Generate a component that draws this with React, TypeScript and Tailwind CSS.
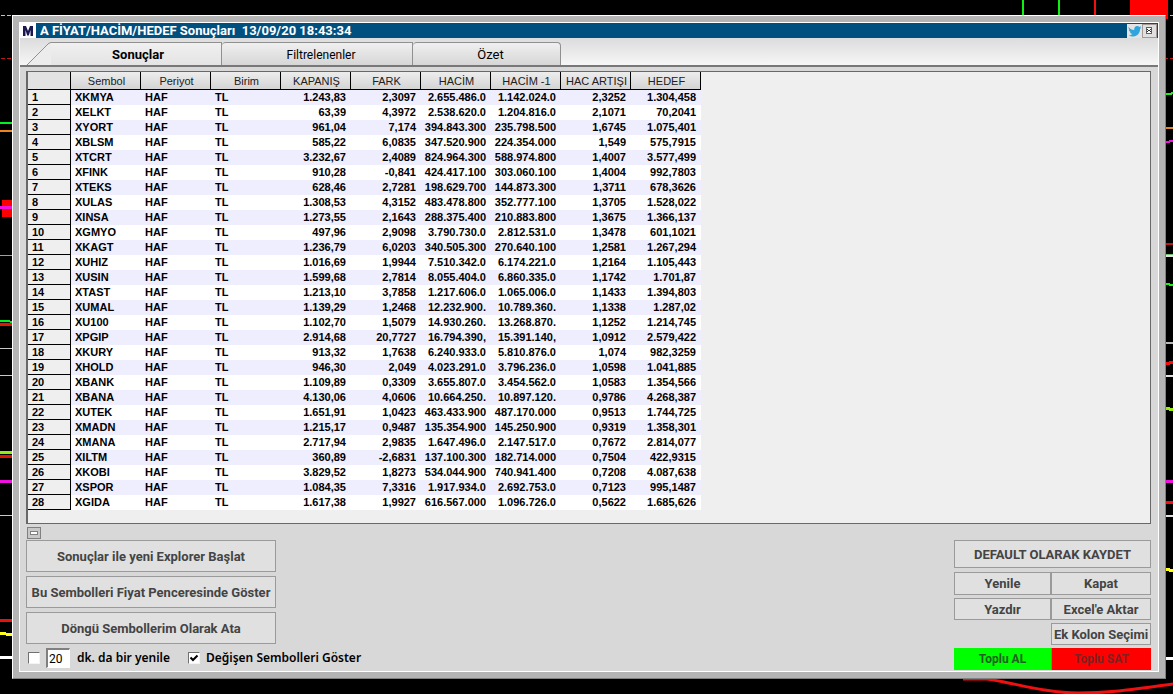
import type { ReactNode } from "react";

const COLUMNS = ["Sembol", "Periyot", "Birim", "KAPANIŞ", "FARK", "HACİM", "HACİM -1", "HAC ARTIŞI", "HEDEF"];

const ROWS = `XKMYA 1.243,83 2,3097 2.655.486.0 1.142.024.0 2,3252 1.304,458
XELKT 63,39 4,3972 2.538.620.0 1.204.816.0 2,1071 70,2041
XYORT 961,04 7,174 394.843.300 235.798.500 1,6745 1.075,401
XBLSM 585,22 6,0835 347.520.900 224.354.000 1,549 575,7915
XTCRT 3.232,67 2,4089 824.964.300 588.974.800 1,4007 3.577,499
XFINK 910,28 -0,841 424.417.100 303.060.100 1,4004 992,7803
XTEKS 628,46 2,7281 198.629.700 144.873.300 1,3711 678,3626
XULAS 1.308,53 4,3152 483.478.800 352.777.100 1,3705 1.528,022
XINSA 1.273,55 2,1643 288.375.400 210.883.800 1,3675 1.366,137
XGMYO 497,96 2,9098 3.790.730.0 2.812.531.0 1,3478 601,1021
XKAGT 1.236,79 6,0203 340.505.300 270.640.100 1,2581 1.267,294
XUHIZ 1.016,69 1,9944 7.510.342.0 6.174.221.0 1,2164 1.105,443
XUSIN 1.599,68 2,7814 8.055.404.0 6.860.335.0 1,1742 1.701,87
XTAST 1.213,10 3,7858 1.217.606.0 1.065.006.0 1,1433 1.394,803
XUMAL 1.139,29 1,2468 12.232.900. 10.789.360. 1,1338 1.287,02
XU100 1.102,70 1,5079 14.930.260. 13.268.870. 1,1252 1.214,745
XPGIP 2.914,68 20,7727 16.794.390, 15.391.140, 1,0912 2.579,422
XKURY 913,32 1,7638 6.240.933.0 5.810.876.0 1,074 982,3259
XHOLD 946,30 2,049 4.023.291.0 3.796.236.0 1,0598 1.041,885
XBANK 1.109,89 0,3309 3.655.807.0 3.454.562.0 1,0583 1.354,566
XBANA 4.130,06 4,0606 10.664.250. 10.897.120. 0,9786 4.268,387
XUTEK 1.651,91 1,0423 463.433.900 487.170.000 0,9513 1.744,725
XMADN 1.215,17 0,9487 135.354.900 145.250.900 0,9319 1.358,301
XMANA 2.717,94 2,9835 1.647.496.0 2.147.517.0 0,7672 2.814,077
XILTM 360,89 -2,6831 137.100.300 182.714.000 0,7504 422,9315
XKOBI 3.829,52 1,8273 534.044.900 740.941.400 0,7208 4.087,638
XSPOR 1.084,35 7,3316 1.917.934.0 2.692.753.0 0,7123 995,1487
XGIDA 1.617,38 1,9927 616.567.000 1.096.726.0 0,5622 1.685,626`
  .split("\n")
  .map((line) => line.split(" "));

function Backdrop() {
  return (
    <div aria-hidden="true">
      <svg className="absolute left-0 top-0" width="12" height="694" shapeRendering="crispEdges">
        <path d="M1 15.5h4M7 15.5h4" stroke="#c9c98a" />
        <path d="M1 58.5h4M7 58.5h4" stroke="#c01818" />
        <path d="M0 123h12M0 321h8l4 1" stroke="#00f020" strokeWidth="2" />
        <path d="M0 131h12" stroke="#f08020" strokeWidth="2" />
        <path d="M2 200h10v17H2z" fill="#f00" />
        <path d="M0 208l12-1M0 481h12" stroke="#f010e0" strokeWidth="3" />
        <path d="M0 255.5h12" stroke="#70c070" />
        <path d="M0 325l12-1M0 456h12" stroke="#e01800" strokeWidth="3" />
        <path d="M0 348h12M0 375.5h12M0 515.5h12" stroke="#c8c8c8" />
        <path d="M0 452l12 1" stroke="#90f010" strokeWidth="3" />
        <path d="M0 620h12" stroke="#e81010" strokeWidth="3" />
        <path d="M0 633l12 2" stroke="#ffff18" strokeWidth="3" />
        <path d="M0 657h12" stroke="#fff" strokeWidth="3" />
      </svg>
      <svg className="absolute right-0 top-0" width="7" height="694" shapeRendering="crispEdges">
        <path d="M0 15.5h2M4 15.5h3" stroke="#c9c98a" />
        <path d="M0 58.5h2M4 58.5h3" stroke="#c01818" />
        <path d="M0 94h4l3-1M0 284l7 1" stroke="#20f020" strokeWidth="2" />
        <path d="M0 128h7" stroke="#e08830" strokeWidth="2" />
        <path d="M0 142l7-1" stroke="#f010e0" strokeWidth="2" />
        <path d="M0 244h7" stroke="#b81818" strokeWidth="2" />
        <path d="M0 256h7M0 375.500h7M0 516h7" stroke="#e0e0e0" strokeWidth="2" />
        <path d="M0 254.500h7" stroke="#70c070" />
        <path d="M0 343h7" stroke="#b8b8b8" strokeWidth="2" />
        <path d="M0 364l7-2M0 502h7" stroke="#f01010" strokeWidth="3" />
        <path d="M0 408l7 2" stroke="#90f010" strokeWidth="3" />
        <path d="M0 481h7" stroke="#f010e0" strokeWidth="3" />
        <path d="M0 569l7 2" stroke="#ffff18" strokeWidth="3" />
        <path d="M0 658h7" stroke="#fff" strokeWidth="3" />
      </svg>
      <svg className="absolute right-0 top-0" width="160" height="20" shapeRendering="crispEdges">
        <path d="M9 0h2v15h-2zM45 0h2v15h-2z" fill="#10f010" />
        <path d="M81 0h2v15h-2z" fill="#f01010" />
        <path d="M117 0h38v19h-38z" fill="#f00" />
      </svg>
      <svg className="absolute bottom-0 right-0" width="220" height="16">
        <path d="M10 1L34 1C62 5 92 15 125 15S175 12 220 6" fill="none" stroke="#f01010" strokeWidth="3" />
      </svg>
    </div>
  );
}

function PushButton({ children, className = "" }: { children: ReactNode; className?: string }) {
  return (
    <button
      type="button"
      className={`flex items-center justify-center whitespace-nowrap border border-[#9a9a9a] bg-[#e0e0e0] pt-px font-['Roboto',sans-serif] text-[13px] font-bold leading-4 text-[#444444] ${className}`}
    >
      {children}
    </button>
  );
}

function TitleBar() {
  return (
    <header className="flex h-[15px] items-center bg-[#00507f]">
      <svg width="16" height="15" className="shrink-0">
        <path d="M0 0h16v15H0z" fill="#fff" />
        <path d="M3 13V3h3L8 8l2-5h3v10h-2.500V7L8.800 12.500H7.200L5.500 7v6z" fill="#1c1850" />
      </svg>
      <h1 className="ml-1 flex-1 whitespace-pre font-['Roboto',sans-serif] text-[13px] font-bold leading-4 text-white">
        A FİYAT/HACİM/HEDEF Sonuçları{"  "}13/09/20 18:43:34
      </h1>
      <button type="button" aria-label="Twitter" className="h-[14px] w-[15px] self-end bg-[#e4e4e4]">
        <svg width="15" height="14" viewBox="0 0 15 14">
          <path d="M1.500 3C3 5 5 6 7.200 6 7 3.500 8.500 2 10.200 2c.9 0 1.600.3 2.200.9l1.600-.6-.7 1.500 1-.2-1.200 1.500C13 9 10.500 12.500 6.500 12.500c-1.900 0-3.500-.4-4.800-1.300 1.500 0 2.700-.3 3.800-1.200-1.300-.1-2.200-.8-2.600-1.800h1.200C2.600 7.700 1.800 6.600 1.800 5.200l1.100.3C1.700 4.700 1.200 3.800 1.500 3z" fill="#30a4dc" />
        </svg>
      </button>
      <button type="button" aria-label="Pencereyi kapat" className="mr-px h-[14px] w-[15px] self-end border border-[#a39a98] bg-[#e0e0e0]">
        <svg width="13" height="12" viewBox="0 0 13 12" shapeRendering="crispEdges">
          <path d="M3.500 2.500h5v6h-5z" fill="#fff" stroke="#606060" />
          <path d="M4 4h1v1H4zM7 4h1v1H7zM5 5h2v1H5zM4 6h1v1H4zM7 6h1v1H7z" fill="#303030" />
        </svg>
      </button>
    </header>
  );
}

function Tabs() {
  return (
    <div role="tablist" className="flex h-[27px] items-end bg-linear-to-b from-[#dcdcdc] to-[#f6f6f6] pl-[7px] font-['Roboto',sans-serif] text-[13px] leading-4">
      <svg width="24" height="23" className="shrink-0">
        <path d="M0 23L20 3Q22 .5 24 .5V23z" fill="#ececec" />
        <path d="M0 23L20 3Q22 .5 24 .5" fill="none" stroke="#909090" />
      </svg>
      <button type="button" role="tab" aria-selected="true" className="h-[23px] w-[171px] border-r border-t border-[#909090] bg-linear-to-b from-[#f0f0f0] to-[#e4e4e4] pl-1 pt-px font-bold">
        Sonuçlar
      </button>
      <button type="button" role="tab" aria-selected="false" className="h-[23px] w-[191px] rounded-tl border-r border-t border-[#909090] bg-linear-to-b from-[#f0f0f0] to-[#d6d6d6] pl-2 pt-px text-[12px]">
        Filtrelenenler
      </button>
      <button type="button" role="tab" aria-selected="false" className="h-[23px] w-[148px] rounded-t border-r border-t border-[#909090] bg-linear-to-b from-[#f0f0f0] to-[#d6d6d6] pl-2 pt-px">
        Özet
      </button>
    </div>
  );
}

function ResultsTable() {
  return (
    <table className="w-[673px] table-fixed border-separate border-spacing-0 text-[11px] leading-[14px] text-black">
      <thead>
        <tr className="h-[18px]">
          <th aria-label="Sıra" className="w-[43px] border-b border-r border-black bg-[#e2e2e2] p-0" />
          {COLUMNS.map((name) => (
            <th
              key={name}
              scope="col"
              className="w-[70px] whitespace-nowrap border-b border-r border-black bg-linear-to-b from-[#ededed] to-[#d4d4d4] p-0 pl-[2px] text-center font-normal text-[#202020]"
            >
              {name}
            </th>
          ))}
        </tr>
      </thead>
      <tbody>
        {ROWS.map(([symbol, ...values], i) => (
          <tr key={symbol} className="h-[15px] font-bold odd:bg-[#eeeeff] even:bg-white">
            <th scope="row" className="border-b border-r border-black bg-[#efefef] p-0 pl-1 text-left">
              {i + 1}
            </th>
            <td className="p-0 pb-px pl-1">{symbol}</td>
            <td className="p-0 pb-px pl-1">HAF</td>
            <td className="p-0 pb-px pl-1">TL</td>
            {values.map((value, j) => (
              <td key={j} className="overflow-hidden whitespace-nowrap p-0 pb-px pr-[5px] text-right">
                {value}
              </td>
            ))}
          </tr>
        ))}
      </tbody>
    </table>
  );
}

function Check({ id, checked = false }: { id: string; checked?: boolean }) {
  return (
    <span className="relative flex">
      <input
        id={id}
        type="checkbox"
        defaultChecked={checked}
        className="peer size-3 appearance-none border border-b-[#f4f4f4] border-l-[#707070] border-r-[#f4f4f4] border-t-[#707070] bg-white"
      />
      <svg width="12" height="12" className="pointer-events-none absolute left-0 top-0 hidden peer-checked:block">
        <path d="M2.500 5.500L5 8L9.500 3.500" fill="none" stroke="#000" strokeWidth="2" />
      </svg>
    </span>
  );
}

export default function App() {
  return (
    <div className="relative flex min-h-screen flex-col bg-black pb-[15px] pl-3 pr-[7px] pt-[15px] font-['Liberation_Sans',sans-serif]">
      <Backdrop />
      <div className="relative flex flex-1 flex-col border border-b-[#808080] border-l-white border-r-[#808080] border-t-white bg-[#b4b4b4] p-[6px]">
        <main className="flex flex-1 flex-col border border-white bg-[#d8d8d8]">
          <TitleBar />
          <Tabs />
          <div className="h-[2px] bg-[#787878]" />
          <div className="ml-[6px] mr-[7px] mt-1 flex-1 border border-l-2 border-[#686868] bg-[#efefef] pb-3">
            <ResultsTable />
          </div>

          <div className="ml-[7px] mt-[3px] flex">
            <button type="button" aria-label="Paneli daralt" className="flex h-3 w-[14px] items-center justify-center border border-[#808080] bg-[#c8c8c8]">
              <span className="h-1 w-2 border border-[#808080] bg-white" />
            </button>
          </div>

          <div className="mb-px ml-[6px] mr-[7px] mt-px flex items-start justify-between">
            <div className="flex flex-col">
              <div className="flex w-[250px] flex-col gap-1">
                <PushButton className="h-8">Sonuçlar ile yeni Explorer Başlat</PushButton>
                <PushButton className="h-8">Bu Sembolleri Fiyat Penceresinde Göster</PushButton>
                <PushButton className="h-8">Döngü Sembollerim Olarak Ata</PushButton>
              </div>
              <div className="mt-1 flex items-center font-['Noto_Sans',sans-serif] text-[12px] font-semibold leading-4 text-black">
                <span className="ml-[2px] flex">
                  <Check id="auto" />
                </span>
                <input
                  aria-label="Yenileme süresi"
                  defaultValue="20"
                  className="ml-[6px] h-5 w-6 rounded-none border border-l-2 border-t-2 border-b-white border-l-[#808080] border-r-white border-t-[#808080] bg-white pl-px font-['Roboto',sans-serif] font-normal"
                />
                <label htmlFor="auto" className="ml-[7px]">
                  dk. da bir yenile
                </label>
                <span className="ml-[18px] flex">
                  <Check id="changed" checked />
                </span>
                <label htmlFor="changed" className="ml-[6px]">
                  Değişen Sembolleri Göster
                </label>
              </div>
            </div>

            <div className="grid w-[197px] grid-cols-[97px_100px] gap-y-[3px]">
              <PushButton className="col-span-2 mb-px h-7">DEFAULT OLARAK KAYDET</PushButton>
              <PushButton className="h-[23px]">Yenile</PushButton>
              <PushButton className="h-[23px]">Kapat</PushButton>
              <PushButton className="h-[22px]">Yazdır</PushButton>
              <PushButton className="h-[22px]">Excel'e Aktar</PushButton>
              <PushButton className="col-start-2 h-[22px]">Ek Kolon Seçimi</PushButton>
              <button type="button" className="h-[22px] bg-[#00ff00] font-['Roboto',sans-serif] text-[12px] font-bold leading-4 text-[#206020]">
                Toplu AL
              </button>
              <button type="button" className="h-[22px] border-l border-[#808080] bg-[#ff0000] font-['Roboto',sans-serif] text-[12px] font-bold leading-4 text-[#802020]">
                Toplu SAT
              </button>
            </div>
          </div>
        </main>
      </div>
    </div>
  );
}
